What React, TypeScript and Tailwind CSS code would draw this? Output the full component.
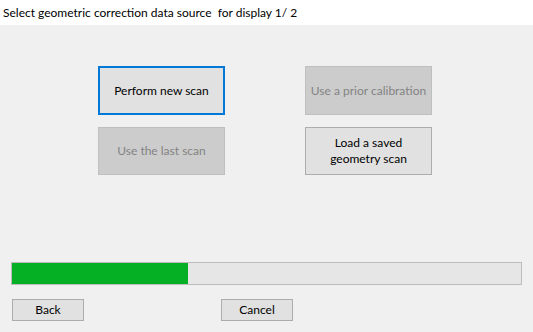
export default function App() {
  const font = { fontFamily: '"Segoe UI", Lato, sans-serif' };
  return (
    <div className="flex h-[332px] w-[533px] flex-col bg-[#f0f0f0] text-[12px] text-black" style={font}>
      <div className="flex h-[25px] items-center bg-white pl-[3px] whitespace-pre">
        Select geometric correction data source  for display 1/ 2
      </div>

      <div className="mt-[41px] grid grid-cols-[127px_127px] gap-x-[80px] gap-y-[12px] pl-[98px]">
        <button className="h-[49px] border-2 border-[#0078d7] bg-[#e1e1e1]">Perform new scan</button>
        <button disabled className="h-[49px] border border-[#bfbfbf] bg-[#cccccc] text-[#838383]">
          Use a prior calibration
        </button>
        <button disabled className="h-[48px] border border-[#bfbfbf] bg-[#cccccc] text-[#838383]">
          Use the last scan
        </button>
        <button className="h-[48px] border border-[#adadad] bg-[#e1e1e1] leading-[16px]">
          Load a saved
          <br />
          geometry scan
        </button>
      </div>

      <div className="mt-[87px] ml-[11px] flex h-[23px] w-[511px] border border-[#bcbcbc] bg-[#e6e6e6]">
        <div className="h-full w-[176px] bg-[#06b025]" />
      </div>

      <div className="mt-[14px] flex pl-[12px]">
        <button className="h-[22px] w-[72px] border border-[#adadad] bg-[#e1e1e1]">Back</button>
        <button className="ml-[137px] h-[22px] w-[72px] border border-[#adadad] bg-[#e1e1e1]">Cancel</button>
      </div>
    </div>
  );
}
